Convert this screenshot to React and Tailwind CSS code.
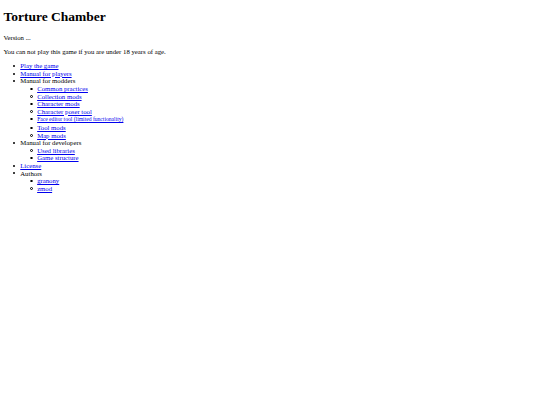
const link = "text-[#0000ee] underline";

const Dot = ({ hollow }) =>
  hollow ? (
    <span className="absolute -left-[6.8px] top-[2.6px] size-[2.4px] rounded-full border-[0.6px] border-black" />
  ) : (
    <span className="absolute -left-[7.6px] top-[2.8px] size-[2px] rounded-full bg-black" />
  );

const Item = ({ href, hollow, children }) => (
  <li className="relative">
    <Dot hollow={hollow} />
    {href ? <a href={href} className={link}>{children}</a> : children}
  </li>
);

const Sub = ({ items }) => (
  <ul className="pl-[16.875px]">
    {items.map(([label, href]) => (
      <Item key={label} href={href} hollow>
        {label}
      </Item>
    ))}
  </ul>
);

export default function App() {
  return (
    <div className="min-h-screen bg-white px-[3.375px] font-['Liberation_Serif','Times_New_Roman',serif] text-[6.75px] leading-[7.6px] text-black">
      <h1 className="my-[9.045px] font-['Liberation_Serif','Times_New_Roman',serif] text-[13.5px] font-bold leading-[15.5px]">
        Torture Chamber
      </h1>
      <p className="my-[6.75px]">Version ...</p>
      <p className="my-[6.75px]">You can not play this game if you are under 18 years of age.</p>
      <ul className="my-[6.75px] pl-[16.875px]">
        <Item href="#play">Play the game</Item>
        <Item href="#players">Manual for players</Item>
        <Item>
          Manual for modders
          <ul className="pl-[16.875px]">
            <Item href="#common" hollow>Common practices</Item>
            <Item href="#collection" hollow>Collection mods</Item>
            <Item href="#character" hollow>Character mods</Item>
            <Item href="#poser" hollow>Character poser tool</Item>
            <li className="relative">
              <Dot hollow />
              <a href="#face" className={link}>
                <small className="text-[5.625px]">Face editor tool (limited functionality)</small>
              </a>
            </li>
            <Item href="#tool" hollow>Tool mods</Item>
            <Item href="#map" hollow>Map mods</Item>
          </ul>
        </Item>
        <Item>
          Manual for developers
          <Sub items={[["Used libraries", "#libs"], ["Game structure", "#structure"]]} />
        </Item>
        <Item href="#license">License</Item>
        <Item>
          Authors
          <Sub items={[["granony", "#granony"], ["zmod", "#zmod"]]} />
        </Item>
      </ul>
    </div>
  );
}
